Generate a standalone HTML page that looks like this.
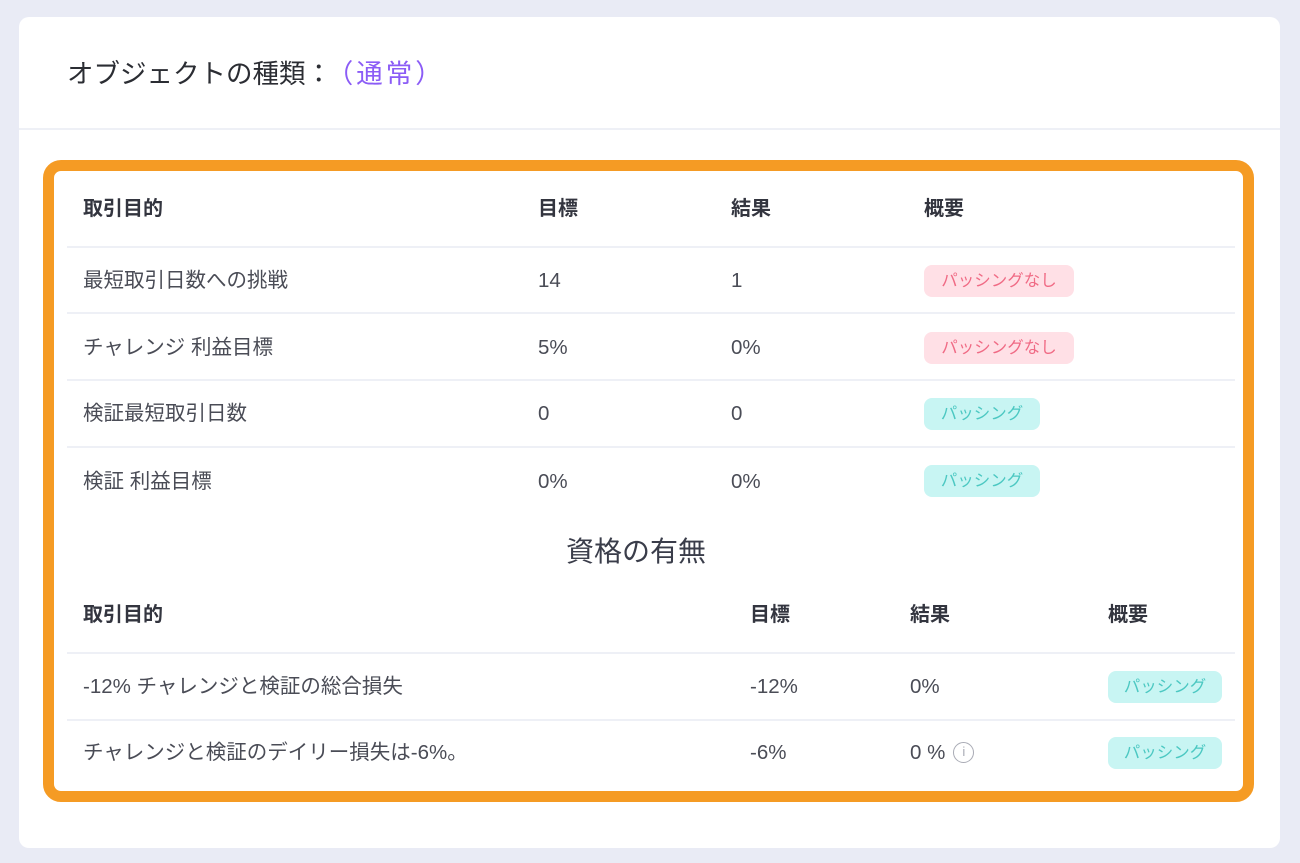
<!DOCTYPE html>
<html><head><meta charset="utf-8"><style>
*{margin:0;padding:0;box-sizing:border-box}
body{width:1300px;height:863px;background:#e9ebf5;font-family:"Liberation Sans","Noto Sans CJK JP",sans-serif;position:relative;overflow:hidden;color:#3a3d4a}
.card{position:absolute;left:19px;top:17px;width:1261px;height:831px;background:#fff;border-radius:10px}
.hd{position:absolute;left:67px;top:58px;font-size:26.5px;line-height:32px;color:#2b2d33;white-space:nowrap}
.hd span{color:#8b5cf6;margin-left:8px;letter-spacing:3px}
.div{position:absolute;left:19px;top:128px;width:1261px;height:2px;background:#eef0f6}
.box{position:absolute;left:43px;top:160px;width:1211px;height:642px;border:11px solid #f59b24;border-radius:18px;background:#fff}
.t{position:absolute;font-size:20.5px;line-height:24px;white-space:nowrap;color:#4a4c56}
.b{font-weight:bold;color:#33353f;font-size:20px}
.ln{position:absolute;left:67px;width:1168px;height:2px;background:#eef0f6}
.bd{position:absolute;height:32px;border-radius:8px;font-size:16.5px;line-height:32px;text-align:center}
.pk{background:#ffe0e6;color:#f06b85;width:150px}
.tl{background:#c8f5f3;color:#4cc8c2;width:116px}
.tl2{width:114px}
.ti{position:absolute;left:0;width:1272px;text-align:center;top:535px;font-size:28px;line-height:34px;color:#3a3d4a}
.ic{display:inline-block;width:21px;height:21px;border:1.5px solid #a9abb5;border-radius:50%;font-size:13px;line-height:18px;text-align:center;color:#a9abb5;vertical-align:3px;margin-left:8px}
</style></head><body>
<div class="card"></div>
<div class="hd">オブジェクトの種類：<span>（通常）</span></div>
<div class="div"></div>
<div class="box"></div>

<div class="t b" style="left:83px;top:197px">取引目的</div>
<div class="t b" style="left:538px;top:197px">目標</div>
<div class="t b" style="left:731px;top:197px">結果</div>
<div class="t b" style="left:924px;top:197px">概要</div>
<div class="ln" style="top:246px"></div>

<div class="t" style="left:83px;top:269px">最短取引日数への挑戦</div>
<div class="t" style="left:538px;top:269px">14</div>
<div class="t" style="left:731px;top:269px">1</div>
<div class="bd pk" style="left:924px;top:265px">パッシングなし</div>
<div class="ln" style="top:312px"></div>

<div class="t" style="left:83px;top:336px">チャレンジ 利益目標</div>
<div class="t" style="left:538px;top:336px">5%</div>
<div class="t" style="left:731px;top:336px">0%</div>
<div class="bd pk" style="left:924px;top:332px">パッシングなし</div>
<div class="ln" style="top:379px"></div>

<div class="t" style="left:83px;top:402px">検証最短取引日数</div>
<div class="t" style="left:538px;top:402px">0</div>
<div class="t" style="left:731px;top:402px">0</div>
<div class="bd tl" style="left:924px;top:398px">パッシング</div>
<div class="ln" style="top:446px"></div>

<div class="t" style="left:83px;top:470px">検証 利益目標</div>
<div class="t" style="left:538px;top:470px">0%</div>
<div class="t" style="left:731px;top:470px">0%</div>
<div class="bd tl" style="left:924px;top:465px">パッシング</div>

<div class="ti">資格の有無</div>

<div class="t b" style="left:83px;top:603px">取引目的</div>
<div class="t b" style="left:750px;top:603px">目標</div>
<div class="t b" style="left:910px;top:603px">結果</div>
<div class="t b" style="left:1108px;top:603px">概要</div>
<div class="ln" style="top:652px"></div>

<div class="t" style="left:83px;top:675px">-12% チャレンジと検証の総合損失</div>
<div class="t" style="left:750px;top:675px">-12%</div>
<div class="t" style="left:910px;top:675px">0%</div>
<div class="bd tl tl2" style="left:1108px;top:671px">パッシング</div>
<div class="ln" style="top:719px"></div>

<div class="t" style="left:83px;top:741px">チャレンジと検証のデイリー損失は-6%。</div>
<div class="t" style="left:750px;top:741px">-6%</div>
<div class="t" style="left:910px;top:741px">0 %<span class="ic">i</span></div>
<div class="bd tl tl2" style="left:1108px;top:737px">パッシング</div>
</body></html>
